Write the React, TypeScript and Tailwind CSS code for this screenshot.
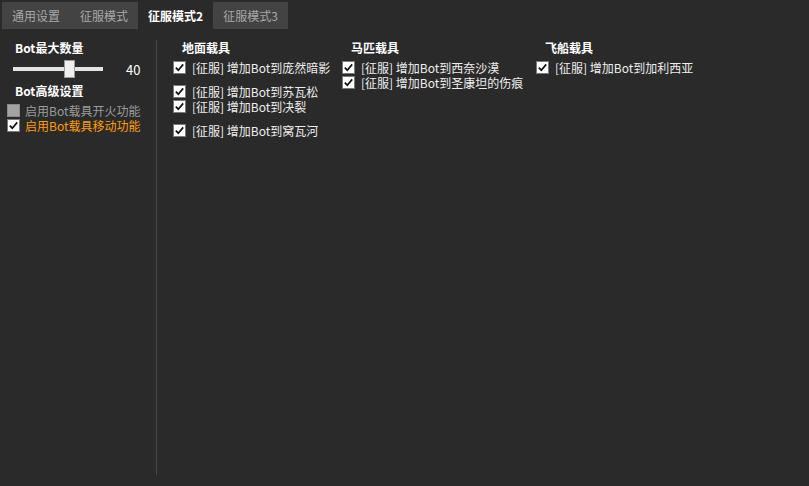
const tabs = ["通用设置", "征服模式", "征服模式2", "征服模式3"];

const Check = ({ checked = true, disabled = false }: { checked?: boolean; disabled?: boolean }) => (
  <span
    className={`flex h-[13px] w-[13px] shrink-0 items-center justify-center border ${
      disabled ? "border-[#8a8a8a] bg-[#a3a3a3]" : "border-[#7a7a7a] bg-white"
    }`}
  >
    {checked && (
      <svg width="11" height="11" viewBox="0 0 11 11" fill="none">
        <path d="M1.8 5.6 L4.3 8.2 L9.2 2.4" stroke="#111" strokeWidth="1.7" />
      </svg>
    )}
  </span>
);

const Item = ({ label }: { label: string }) => (
  <div className="flex h-[15px] items-center gap-[6px]">
    <Check />
    <span className="block h-[15px] overflow-hidden whitespace-nowrap leading-[15px] text-[#eeeeee]">{label}</span>
  </div>
);

const Column = ({ title, width, groups }: { title: string; width: string; groups: string[][] }) => (
  <div className={`flex flex-col ${width}`}>
    <div className="ml-[9px] h-[15px] font-bold leading-[15px] text-white">{title}</div>
    <div className="mt-[5px] flex flex-col gap-[9px]">
      {groups.map((g, i) => (
        <div key={i} className="flex flex-col">
          {g.map((l) => (
            <Item key={l} label={l} />
          ))}
        </div>
      ))}
    </div>
  </div>
);

export default function App() {
  return (
    <div
      className="h-[486px] w-[809px] overflow-hidden bg-[#2a2a2a] text-[12px] leading-[15px]"
      style={{ fontFamily: '"Noto Sans CJK SC", "Noto Sans", sans-serif' }}
    >
      {/* Tabs */}
      <div className="flex pl-[2px] pt-[2px]">
        {tabs.map((t, i) => (
          <div
            key={t}
            className={`flex h-[27px] items-center px-[10px] ${
              i === 2 ? "font-bold text-white" : "bg-[#434343] text-[#a8a8a8]"
            }`}
          >
            {t}
          </div>
        ))}
      </div>

      <div className="mt-[11px] flex h-[435px]">
        {/* Left panel */}
        <div className="flex w-[157px] shrink-0 flex-col border-r border-[#474747]">
          <div className="h-[15px] pl-[15px] font-bold text-white">Bot最大数量</div>
          <div className="mt-[5px] flex h-[18px] items-center">
            <div className="relative ml-[13px] h-[18px] w-[90px]">
              <div className="absolute left-0 right-0 top-[7px] h-[4px] bg-[#e4e4e4]" />
              <div className="absolute left-[51px] top-0 h-[18px] w-[11px] border border-[#9a9a9a] bg-[#efefef]" />
            </div>
            <span className="ml-[23px] block h-[15px] text-[13px] leading-[15px] text-white">40</span>
          </div>
          <div className="mt-[5px] h-[15px] pl-[15px] font-bold text-white">Bot高级设置</div>
          <div className="mt-[5px] flex flex-col pl-[7px]">
            <div className="flex h-[15px] items-center gap-[5px]">
              <Check checked={false} disabled />
              <span className="block h-[15px] whitespace-nowrap leading-[15px] text-[#9b9b9b]">启用Bot载具开火功能</span>
            </div>
            <div className="flex h-[15px] items-center gap-[5px]">
              <Check />
              <span className="block h-[15px] whitespace-nowrap leading-[15px] text-[#ff9c00]">启用Bot载具移动功能</span>
            </div>
          </div>
        </div>

        {/* Right panel */}
        <div className="flex pl-[16px]">
          <Column
            title="地面载具"
            width="w-[169px]"
            groups={[
              ["[征服] 增加Bot到庞然暗影"],
              ["[征服] 增加Bot到苏瓦松", "[征服] 增加Bot到决裂"],
              ["[征服] 增加Bot到窝瓦河"],
            ]}
          />
          <Column
            title="马匹载具"
            width="w-[194px]"
            groups={[["[征服] 增加Bot到西奈沙漠", "[征服] 增加Bot到圣康坦的伤痕"]]}
          />
          <Column title="飞船载具" width="w-[200px]" groups={[["[征服] 增加Bot到加利西亚"]]} />
        </div>
      </div>
    </div>
  );
}
